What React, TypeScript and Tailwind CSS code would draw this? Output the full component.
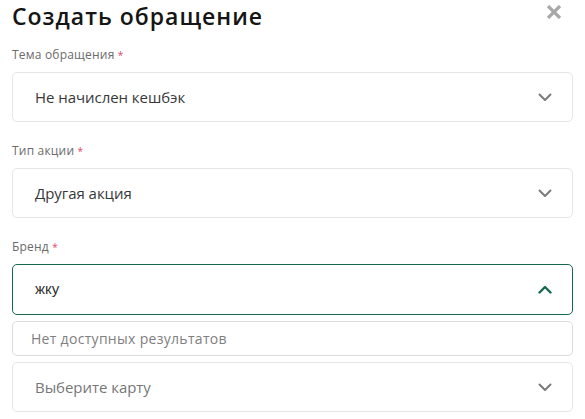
import React from "react";

const font = { fontFamily: '"Open Sans", "Noto Sans", sans-serif' };

function ChevronDown({ color = "#7a7a7a" }: { color?: string }) {
  return (
    <svg width="14" height="9" viewBox="0 0 14 9" fill="none">
      <path d="M1.5 1.5 L7 7 L12.5 1.5" stroke={color} strokeWidth="2" strokeLinecap="round" strokeLinejoin="round" />
    </svg>
  );
}

function ChevronUp({ color = "#17694a" }: { color?: string }) {
  return (
    <svg width="14" height="9" viewBox="0 0 14 9" fill="none">
      <path d="M1.5 7.5 L7 2 L12.5 7.5" stroke={color} strokeWidth="2.4" strokeLinecap="round" strokeLinejoin="round" />
    </svg>
  );
}

function Label({ text }: { text: string }) {
  return (
    <div className="text-[12px] leading-[16px] text-[#6b6b6b] tracking-[0.2px]" style={font}>
      {text} <span className="text-[#e0476a] text-[10px] align-top">*</span>
    </div>
  );
}

function Select({ value, placeholder }: { value: string; placeholder?: boolean }) {
  return (
    <div className="h-[50px] rounded-[5px] border border-[#e6e6e6] bg-white flex items-center pl-[22px] pr-[20px]">
      <span
        className={`flex-1 text-[15px] tracking-[-0.05px] ${placeholder ? "text-[#777]" : "text-[#383838]"}`}
        style={font}
      >
        {value}
      </span>
      <ChevronDown />
    </div>
  );
}

export default function App() {
  return (
    <div className="w-[585px] h-[419px] bg-white overflow-hidden px-[12px] pt-[0px]" style={font}>
      <div className="flex items-start justify-between h-[34px]">
        <h1 className="text-[23px] leading-[32px] font-semibold text-[#151515] tracking-[1px]" style={font}>
          Создать обращение
        </h1>
        <svg width="16" height="14" viewBox="0 0 16 14" className="mt-[5px] mr-[11px]">
          <path d="M2 1 L14 13 M14 1 L2 13" stroke="#a8a8a8" strokeWidth="3.2" />
        </svg>
      </div>
      <div className="mt-[13px]">
        <Label text="Тема обращения" />
        <div className="mt-[9px]">
          <Select value="Не начислен кешбэк" />
        </div>
      </div>
      <div className="mt-[21px]">
        <Label text="Тип акции" />
        <div className="mt-[9px]">
          <Select value="Другая акция" />
        </div>
      </div>
      <div className="mt-[21px]">
        <Label text="Бренд" />
        <div className="mt-[9px] h-[51px] rounded-[5px] border border-[#17694a] bg-white flex items-center pl-[22px] pr-[20px]">
          <span
            className="flex-1 text-[15px] text-[#333]"
            style={{ fontFamily: '"Liberation Sans", Arial, sans-serif' }}
          >
            жку
          </span>
          <ChevronUp />
        </div>
        <div className="mt-[6px] h-[35px] rounded-[5px] border border-[#dcdcdc] bg-white flex items-center pl-[18px]">
          <span className="text-[14px] text-[#808080] tracking-[0.3px]" style={font}>
            Нет доступных результатов
          </span>
        </div>
        <div className="mt-[6px]">
          <Select value="Выберите карту" placeholder />
        </div>
      </div>
    </div>
  );
}
